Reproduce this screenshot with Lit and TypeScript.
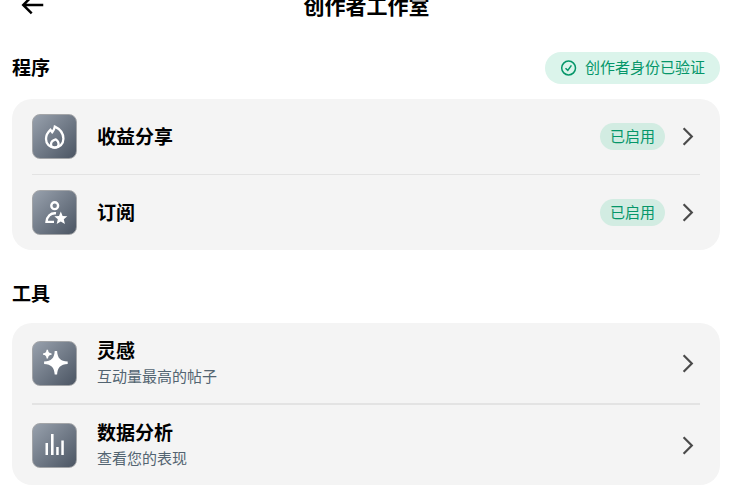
import { LitElement, html, css, svg, nothing, TemplateResult } from "lit";
import { customElement, property } from "lit/decorators.js";

type IconName = "flame" | "subscriber" | "sparkle" | "bars";

interface Entry {
  icon: IconName;
  title: string;
  note?: string;
  status?: string;
}

const programs: Entry[] = [
  { icon: "flame", title: "收益分享", status: "已启用" },
  { icon: "subscriber", title: "订阅", status: "已启用" },
];

const tools: Entry[] = [
  { icon: "sparkle", title: "灵感", note: "互动量最高的帖子" },
  { icon: "bars", title: "数据分析", note: "查看您的表现" },
];

const glyphs: Record<IconName, TemplateResult> = {
  flame: svg`
    <g fill="none" stroke="#fff" stroke-width="2.3" stroke-linejoin="miter">
      <path d="M22.8 12.6C28 15 31.4 19.4 31.4 24.8C31.4 30 27.6 33.6 22.7 33.6C17.8 33.6 14 30 14 25C14 21.2 16 18 18.4 15.8L20.2 18.2C21.4 16.8 22.4 15 22.8 12.6Z"/>
      <path d="M23.8 25.4C25.6 26.6 26.6 28.2 26.6 30C26.6 32.2 25 33.6 22.8 33.6C20.6 33.6 19 32.2 19 30.2C19 28 21 26.2 23.8 25.4Z"/>
    </g>`,
  subscriber: svg`
    <circle cx="22.7" cy="15.7" r="3.4" fill="none" stroke="#fff" stroke-width="2.4"/>
    <path d="M24 23.3C18.6 22.6 14.8 26.4 14.5 31.9H22" fill="none" stroke="#fff" stroke-width="2.4"/>
    <path fill="#fff" d="M28.8 21.6L30.6 25.9L35.3 26.3L31.8 29.3L32.9 33.9L28.8 31.4L24.7 33.9L25.8 29.3L22.3 26.3L27 25.9Z"/>`,
  sparkle: svg`
    <path fill="#fff" d="M22.7 10H25.1C25.5 17.2 28.4 20.1 35.7 20.6V22.9C28.4 23.4 25.5 26.3 25.1 33.6H22.7C22.3 26.3 19.4 23.4 12.1 22.9V20.6C19.4 20.1 22.3 17.2 22.7 10Z"/>
    <path fill="#fff" d="M14.6 8.8H16C16.2 11.2 17.2 12.2 19.6 12.4V13.8C17.2 14 16.2 15 16 17.4H14.6C14.4 15 13.4 14 11 13.8V12.4C13.4 12.2 14.4 11.2 14.6 8.8Z"/>`,
  bars: svg`
    <path fill="#fff" d="M13.5 20H16V32H13.5ZM19 11H21.6V32H19ZM24.2 24H26.7V32H24.2ZM29.3 17.5H31.8V32H29.3Z"/>`,
};

@customElement("studio-row")
export class StudioRow extends LitElement {
  @property({ attribute: false }) entry!: Entry;

  static styles = css`
    :host {
      display: block;
    }
    .row {
      display: flex;
      align-items: center;
      gap: 20px;
      padding: 15px 0;
      color: #000;
      text-decoration: none;
    }
    .tile {
      flex: none;
      box-sizing: border-box;
      width: 45px;
      height: 45px;
      overflow: hidden;
      border: 1px solid #a3a5a8;
      border-radius: 8px;
      background: linear-gradient(135deg, #98a1ad, #4b5563);
    }
    .glyph {
      display: block;
      width: 45px;
      height: 45px;
      margin: -1px;
    }
    .text {
      flex: 1;
      min-width: 0;
    }
    .title {
      display: block;
      padding-bottom: 2px;
      font-size: 19px;
      line-height: 23px;
      font-weight: 700;
    }
    .note {
      display: block;
      font-size: 15px;
      line-height: 25px;
      color: #536471;
    }
    .end {
      display: flex;
      align-items: center;
      gap: 10px;
    }
    .status {
      padding: 0 10px 2px;
      border-radius: 14px;
      background: #d2ece2;
      color: #059669;
      font-size: 15px;
      line-height: 25px;
    }
    .chevron {
      width: 25px;
      height: 25px;
    }
  `;

  render() {
    const { icon, title, note, status } = this.entry;
    return html`
      <a class="row" href="#">
        <span class="tile">
          <svg class="glyph" viewBox="0 0 45 45" aria-hidden="true">${glyphs[icon]}</svg>
        </span>
        <span class="text">
          <span class="title">${title}</span>
          ${note ? html`<span class="note">${note}</span>` : nothing}
        </span>
        <span class="end">
          ${status ? html`<span class="status">${status}</span>` : nothing}
          <svg class="chevron" viewBox="0 0 25 25" aria-hidden="true">
            <path d="M8.6 4.3L16.8 12.5L8.6 20.7" fill="none" stroke="#4a4a4a" stroke-width="2.2" />
          </svg>
        </span>
      </a>
    `;
  }
}

@customElement("app-root")
export class AppRoot extends LitElement {
  static styles = css`
    :host {
      display: block;
      background: #fff;
      color: #000;
      font-family: "Noto Sans CJK SC", sans-serif;
    }
    /* The bar is partly scrolled out of view. */
    .bar {
      display: grid;
      grid-template-columns: 45px 1fr 45px;
      align-items: center;
      height: 38px;
      margin-top: -14px;
      padding: 0 16px 0 9px;
    }
    .back {
      display: flex;
      align-items: center;
      justify-content: center;
      height: 38px;
      padding: 0;
      border: 0;
      background: none;
      color: inherit;
    }
    .arrow {
      width: 30px;
      height: 30px;
    }
    .heading {
      margin: 0;
      font-size: 21px;
      line-height: 38px;
      font-weight: 700;
      text-align: center;
    }
    .section {
      padding: 28px 20px 0 12px;
    }
    .section:last-child {
      padding-bottom: 18px;
    }
    .head {
      display: flex;
      align-items: flex-start;
      justify-content: space-between;
      margin-bottom: 15px;
    }
    .label {
      margin: 0;
      font-size: 19px;
      line-height: 30px;
      font-weight: 700;
    }
    .verified {
      display: flex;
      align-items: center;
      gap: 8px;
      padding: 0 15px 2px;
      border-radius: 16px;
      background: #dbf4eb;
      color: #059669;
      font-size: 15px;
      line-height: 30px;
    }
    .check {
      width: 17px;
      height: 17px;
    }
    .card {
      margin: 0;
      padding: 0 20px;
      border-radius: 20px;
      background: #f4f4f4;
      list-style: none;
    }
    .item + .item {
      border-top: 1px solid #e3e3e3;
    }
    .detailed .item + .item {
      border-top-width: 2px;
    }
  `;

  private list(entries: Entry[], extra = "") {
    return html`
      <ul class="card ${extra}">
        ${entries.map(
          (entry) => html`<li class="item"><studio-row .entry=${entry}></studio-row></li>`
        )}
      </ul>
    `;
  }

  render() {
    return html`
      <header class="bar">
        <button class="back" type="button" aria-label="返回">
          <svg class="arrow" viewBox="0 0 24 24" aria-hidden="true">
            <path
              fill="currentColor"
              d="M7.414 13l5.043 5.04-1.414 1.42L3.586 12l7.457-7.46 1.414 1.42L7.414 11H21v2H7.414z"
            />
          </svg>
        </button>
        <h1 class="heading">创作者工作室</h1>
      </header>
      <main>
        <section class="section">
          <div class="head">
            <h2 class="label">程序</h2>
            <span class="verified">
              <svg class="check" viewBox="0 0 17 17" aria-hidden="true">
                <g fill="none" stroke="currentColor" stroke-width="1.5">
                  <circle cx="8.6" cy="9" r="6.9" />
                  <path d="M5.5 9.3L7.8 11.4L11.4 6.4" />
                </g>
              </svg>
              创作者身份已验证
            </span>
          </div>
          ${this.list(programs)}
        </section>
        <section class="section">
          <div class="head"><h2 class="label">工具</h2></div>
          ${this.list(tools, "detailed")}
        </section>
      </main>
    `;
  }
}
